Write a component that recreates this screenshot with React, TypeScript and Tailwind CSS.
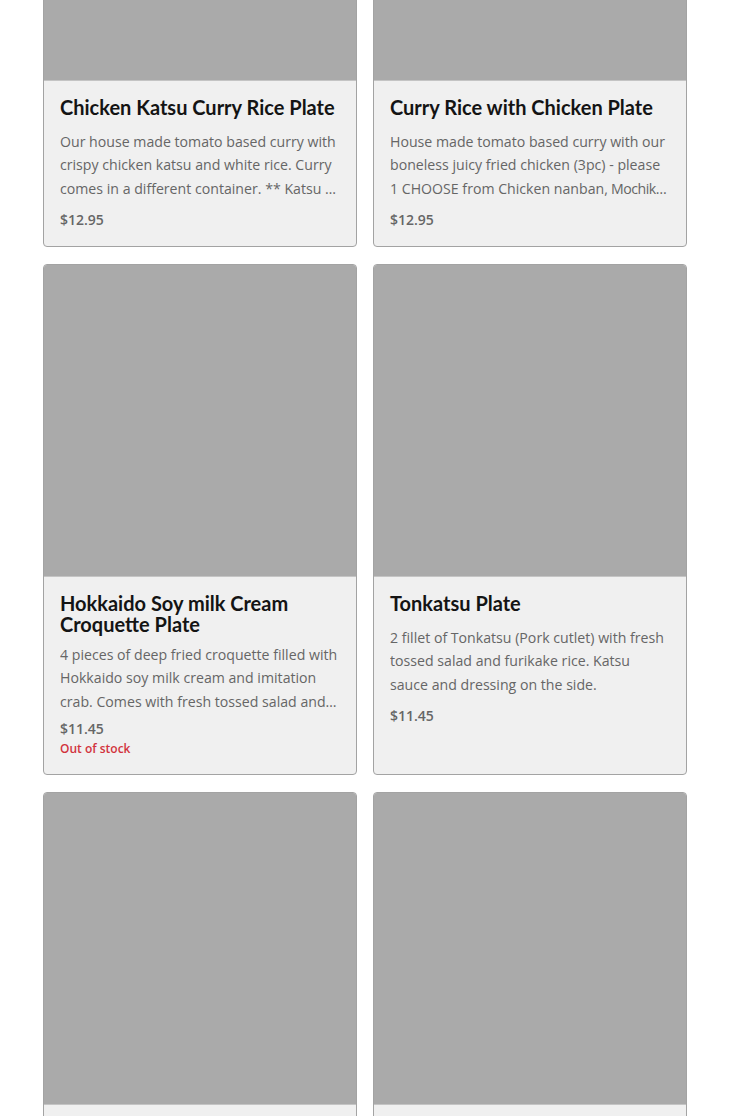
import React from 'react';

interface MenuItem {
  name: string;
  description: React.ReactNode;
  price: string;
  outOfStock?: boolean;
}

// descriptions are cut where the listing cuts them
const items: MenuItem[] = [
  {
    name: 'Chicken Katsu Curry Rice Plate',
    description:
      'Our house made tomato based curry with crispy chicken katsu and white rice. Curry comes in a different container. ** Katsu …',
    price: '$12.95',
  },
  {
    name: 'Curry Rice with Chicken Plate',
    description: (
      <>
        House made tomato based curry with our boneless juicy fried chicken (3pc) - please 1 CHOOSE from Chicken
        nanban,<span className="tracking-[-0.5px]"> Mochik…</span>
      </>
    ),
    price: '$12.95',
  },
  {
    name: 'Hokkaido Soy milk Cream Croquette Plate',
    description:
      '4 pieces of deep fried croquette filled with Hokkaido soy milk cream and imitation crab. Comes with fresh tossed salad and…',
    price: '$11.45',
    outOfStock: true,
  },
  {
    name: 'Tonkatsu Plate',
    description:
      '2 fillet of Tonkatsu (Pork cutlet) with fresh tossed salad and furikake rice. Katsu sauce and dressing on the side.',
    price: '$11.45',
  },
  {
    name: 'Chicken Nanban Plate',
    description: 'Fried chicken with sweet and sour sauce and house made tartar sauce.',
    price: '$11.95',
  },
  {
    name: 'Karaage Plate',
    description: 'Japanese style boneless fried chicken with fresh tossed salad and rice.',
    price: '$11.45',
  },
];

const MenuCard: React.FC<{ item: MenuItem }> = ({ item }) => {
  const compact = item.outOfStock;
  return (
    <div className="flex flex-col bg-[#f0f0f0] border border-[#a3a3a3] rounded-[4px] overflow-hidden">
      <div className="aspect-square w-full bg-[#aaaaaa] border-b border-[#c4c4c4]" />
      <div className="px-4 pt-4 pb-4 flex flex-col">
        <h3 className="text-[20px] leading-[21px] font-bold text-[#141414] font-['Lato',sans-serif]">
          {item.name}
        </h3>
        <p
          className={`${compact ? 'mt-[8px]' : 'mt-[12px]'} text-[14.15px] leading-[23.33px] text-[#666] font-['Open_Sans',sans-serif] line-clamp-3`}
        >
          {item.description}
        </p>
        <div
          className={`${compact ? 'mt-[6px]' : 'mt-[10px]'} text-[14px] leading-[20px] font-semibold text-[#666] font-['Open_Sans',sans-serif]`}
        >
          {item.price}
        </div>
        {item.outOfStock && (
          <div className="text-[12px] leading-[19px] font-semibold text-[#d2333d] font-['Open_Sans',sans-serif]">
            Out of stock
          </div>
        )}
      </div>
    </div>
  );
};

export default function App() {
  return (
    <div className="w-[730px] h-[1116px] overflow-hidden bg-white">
      <div className="w-[644px] ml-[43px] -mt-[232px] grid grid-cols-2 gap-x-4 gap-y-[17px]">
        {items.map((item) => (
          <MenuCard key={item.name} item={item} />
        ))}
      </div>
    </div>
  );
}
